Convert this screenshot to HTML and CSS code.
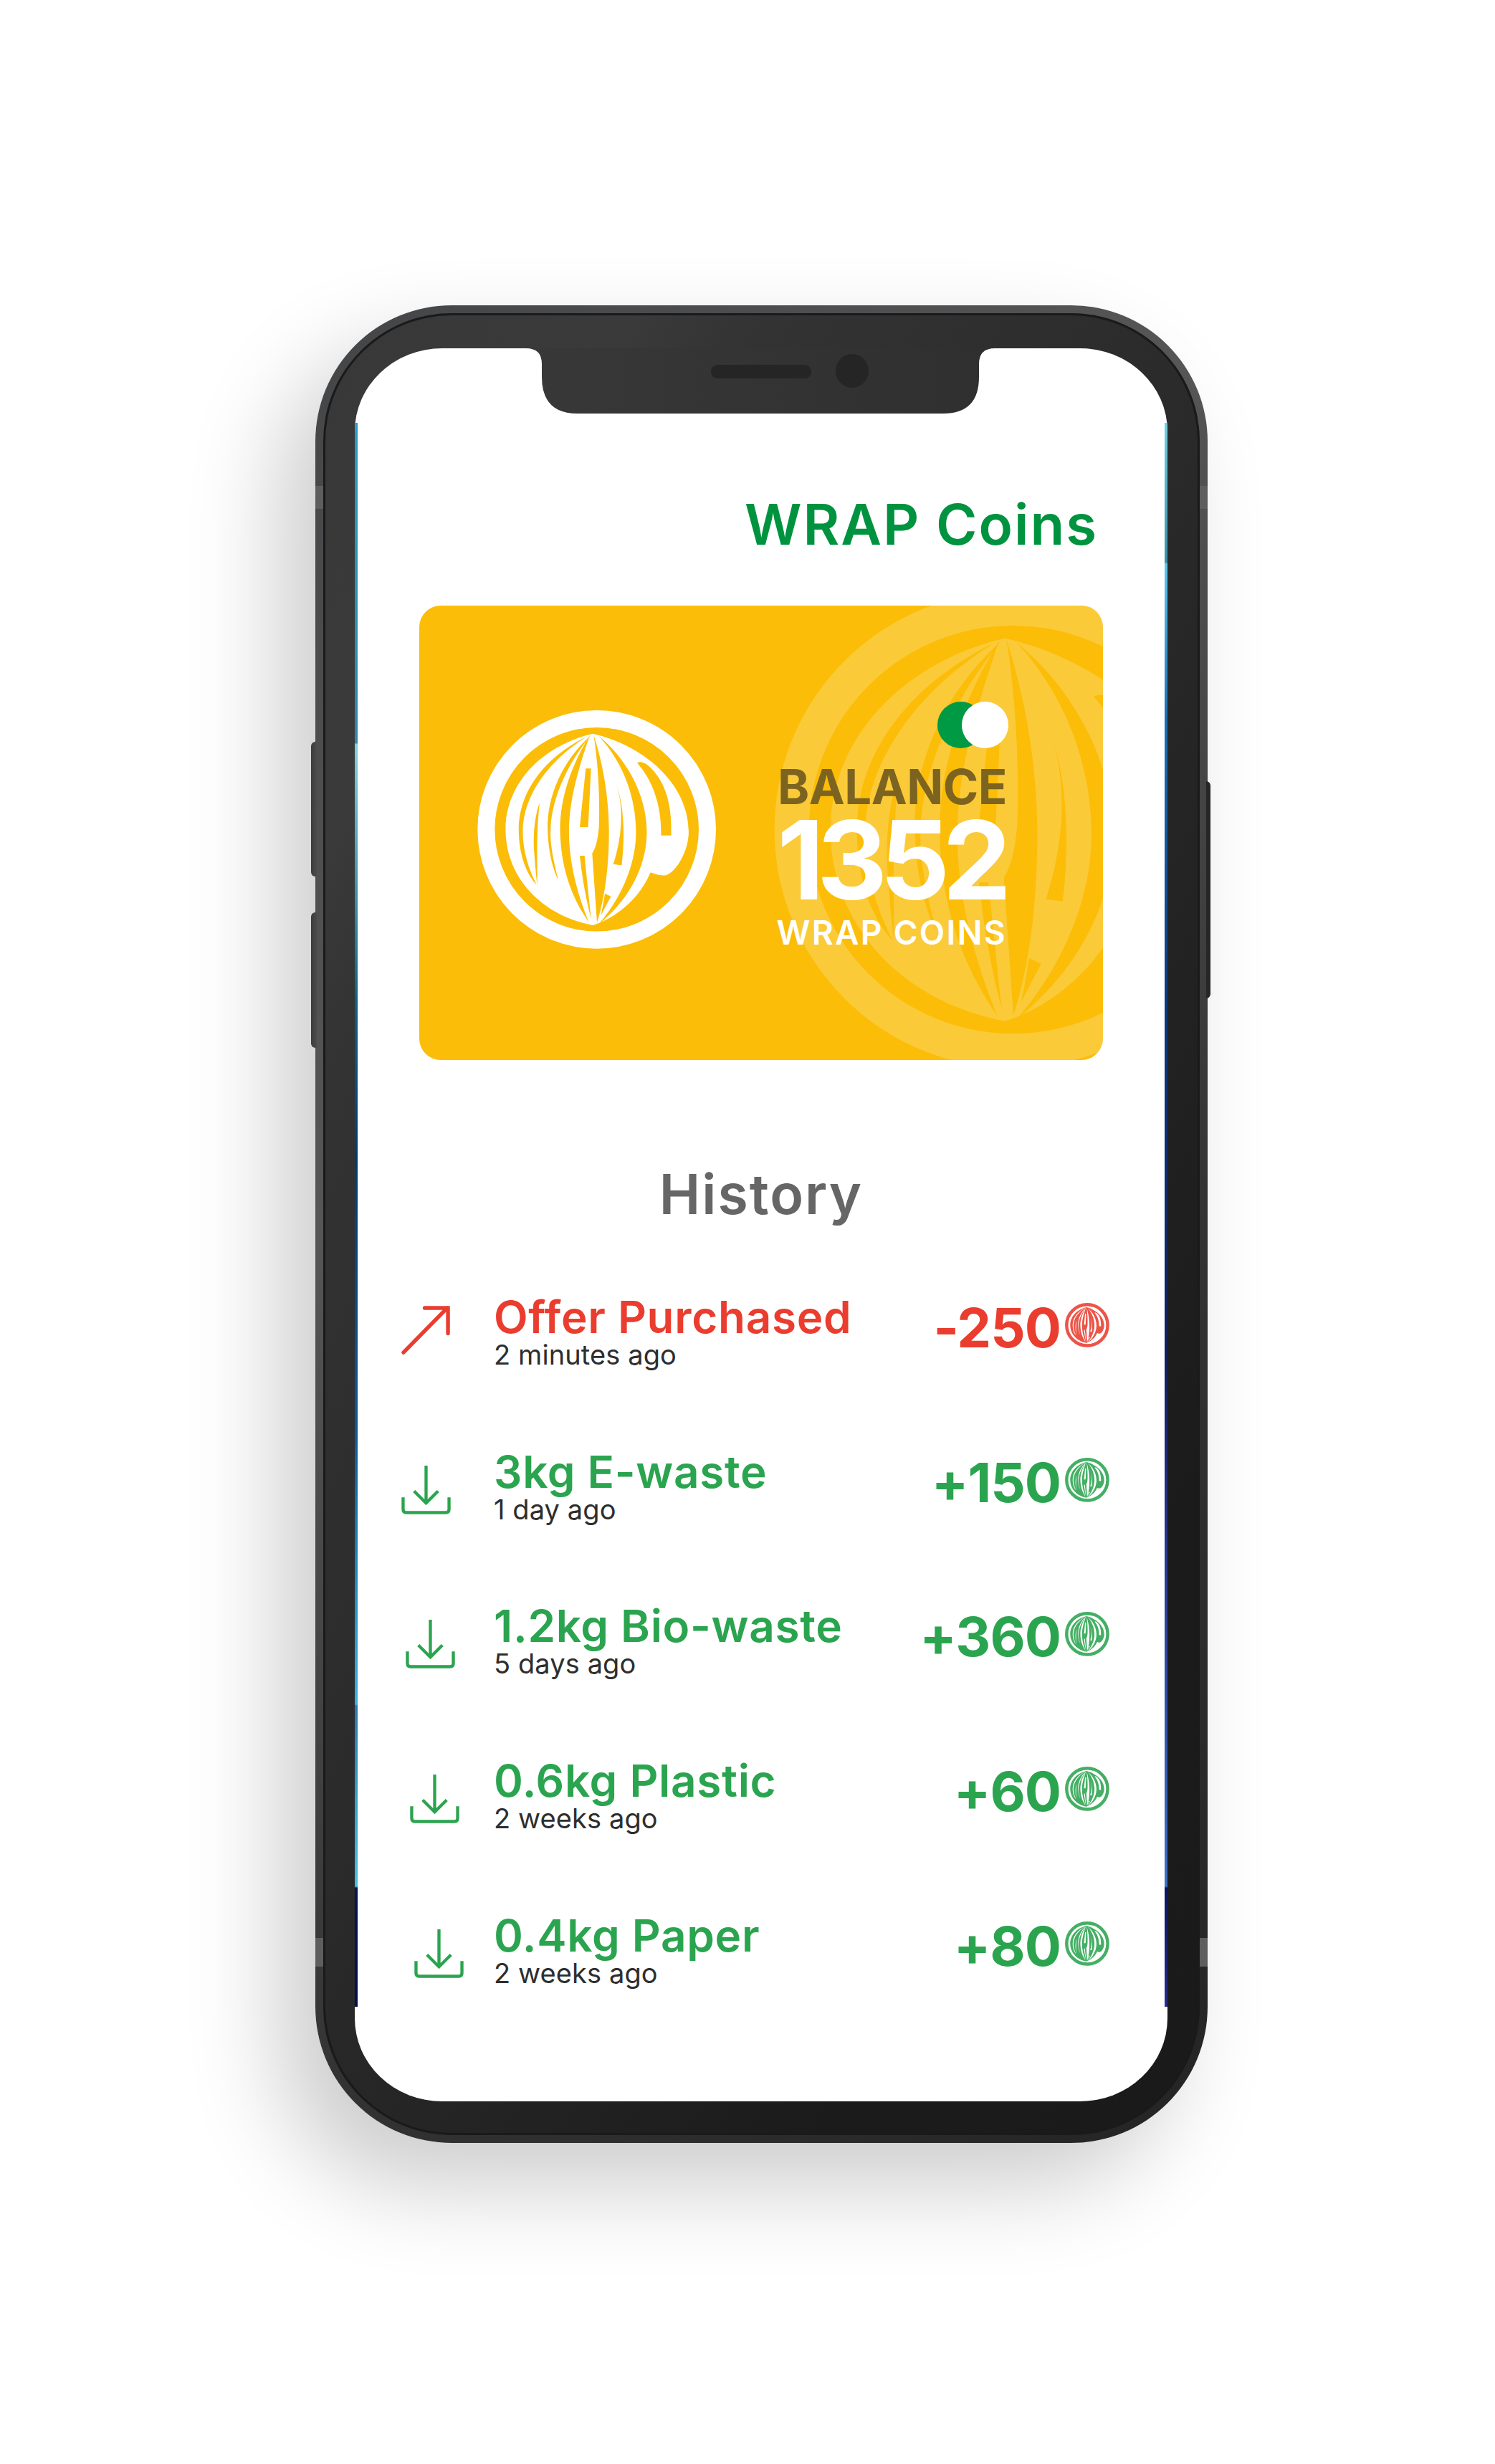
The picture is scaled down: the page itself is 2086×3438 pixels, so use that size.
FILE: index.html
```html
<!DOCTYPE html>
<html lang="en">
<head>
<meta charset="utf-8">
<title>WRAP Coins</title>
<link rel="stylesheet" href="styles.css">
</head>
<body>
<svg class="defs" width="0" height="0" aria-hidden="true">
  <defs>
    <linearGradient id="notch-fill" x1="0" y1="0" x2="1" y2="0">
      <stop offset="0" stop-color="#383838"/>
      <stop offset="1" stop-color="#2f2f2f"/>
    </linearGradient>
    <mask id="globe-cuts" maskUnits="userSpaceOnUse" x="0" y="0" width="1200" height="1200">
      <path fill="#fff" d="M565 190C780 240 965 400 965 600C965 690 900 785 860 782C835 782 820 772 805 770C760 880 660 960 565 990C350 950 200 790 200 590C200 400 350 240 565 190Z"/>
      <g fill="#000">
        <path d="M545 198C340 300 255 450 255 590C255 700 290 780 330 822C298 760 272 680 272 600C272 450 380 300 545 198Z"/>
        <path d="M342 478C320 540 314 620 320 690C324 740 328 790 332 820C334 760 330 680 333 610C335 560 338 520 342 478Z"/>
        <path d="M555 198C440 300 372 450 376 590C378 680 398 760 420 800C400 720 385 650 388 590C392 450 470 300 555 198Z"/>
        <path d="M552 196C470 330 425 470 428 600C432 760 480 880 548 978C500 860 465 730 465 600C465 460 510 320 552 196Z"/>
        <path d="M535 335H557L545 580H510Z"/>
        <path d="M568 195C585 300 595 450 590 580C585 640 575 670 562 690L582 978C620 860 632 720 632 600C632 450 605 310 568 195Z"/>
        <path d="M510 700H530C540 800 550 900 558 965C535 880 520 790 510 700Z"/>
        <path d="M660 395C690 470 695 600 650 735L685 740C700 620 695 480 660 395Z"/>
        <path d="M590 200C700 320 745 470 745 600C745 740 680 880 590 985C720 880 790 740 790 600C790 440 700 290 590 200Z"/>
        <path d="M615 858L640 870L598 950C605 920 610 890 615 858Z"/>
        <path d="M750 312C770 300 800 320 830 360C875 420 895 500 892 615H850C852 480 810 380 750 312Z"/>
      </g>
    </mask>
    <symbol id="wrap-logo" viewBox="82 92 1000 1000">
      <circle cx="581" cy="590" r="462" fill="none" stroke="currentColor" stroke-width="72"/>
      <rect x="150" y="150" width="860" height="880" fill="currentColor" mask="url(#globe-cuts)"/>
    </symbol>
    <symbol id="icon-in" viewBox="0 0 70 70">
      <path d="M35 1V53M18 37L35 54L52 37M2.5 46V63Q2.5 67.500 7 67.500H63Q67.500 67.500 67.500 63V46" fill="none" stroke="currentColor" stroke-width="4.400"/>
    </symbol>
  </defs>
</svg>

<main class="phone">
  <span class="btn btn-left-a"></span>
  <span class="btn btn-left-b"></span>
  <span class="btn btn-right"></span>
  <span class="rail rail-l-top"></span>
  <span class="rail rail-l-bot"></span>
  <span class="rail rail-r-top"></span>
  <span class="rail rail-r-bot"></span>
  <div class="bezel">
    <div class="edge">
      <div class="screen">
        <svg class="notch" viewBox="0 0 654 91" aria-hidden="true">
          <path d="M0 0Q22 0 22 22V40Q22 91 72 91H582Q632 91 632 40V22Q632 0 654 0Z"/>
        </svg>
        <span class="speaker"></span>
        <span class="camera"></span>

        <h1 class="title">WRAP Coins</h1>

        <section class="card">
          <svg class="card-mark"><use href="#wrap-logo"/></svg>
          <svg class="card-logo"><use href="#wrap-logo"/></svg>
          <div class="balance">
            <div class="toggle"><span class="dot-green"></span><span class="dot-white"></span></div>
            <div class="balance-label">BALANCE</div>
            <div class="balance-value">1352</div>
            <div class="balance-unit">WRAP COINS</div>
          </div>
        </section>

        <h2 class="history">History</h2>

        <ul class="rows">
          <li class="row red">
            <span class="slot">
              <svg class="icon arrow" viewBox="0 0 70 70" aria-hidden="true"><path d="M3 67L65 4M33 4H66V40" fill="none" stroke="currentColor" stroke-width="5.500" stroke-linecap="round"/></svg>
            </span>
            <div class="text"><div class="name">Offer Purchased</div><div class="when">2 minutes ago</div></div>
            <div class="amount">-250</div>
            <svg class="coin"><use href="#wrap-logo"/></svg>
          </li>
          <li class="row green">
            <span class="slot">
              <svg class="icon"><use href="#icon-in"/></svg>
            </span>
            <div class="text"><div class="name">3kg E-waste</div><div class="when">1 day ago</div></div>
            <div class="amount">+150</div>
            <svg class="coin"><use href="#wrap-logo"/></svg>
          </li>
          <li class="row green">
            <span class="slot shift-1">
              <svg class="icon"><use href="#icon-in"/></svg>
            </span>
            <div class="text"><div class="name">1.2kg Bio-waste</div><div class="when">5 days ago</div></div>
            <div class="amount">+360</div>
            <svg class="coin"><use href="#wrap-logo"/></svg>
          </li>
          <li class="row green">
            <span class="slot shift-2">
              <svg class="icon"><use href="#icon-in"/></svg>
            </span>
            <div class="text"><div class="name">0.6kg Plastic</div><div class="when">2 weeks ago</div></div>
            <div class="amount">+60</div>
            <svg class="coin"><use href="#wrap-logo"/></svg>
          </li>
          <li class="row green">
            <span class="slot shift-3">
              <svg class="icon"><use href="#icon-in"/></svg>
            </span>
            <div class="text"><div class="name">0.4kg Paper</div><div class="when">2 weeks ago</div></div>
            <div class="amount">+80</div>
            <svg class="coin"><use href="#wrap-logo"/></svg>
          </li>
        </ul>
      </div>
    </div>
  </div>
</main>
</body>
</html>
```
FILE: styles.css
```css
* { box-sizing: border-box; }
html, body { margin: 0; background: #fff; }
body {
  width: 2086px;
  height: 3438px;
  padding: 426px 0 0 440px;
  font-family: Inter, "Liberation Sans", sans-serif;
  overflow: hidden;
}
.defs { position: absolute; }

.phone {
  position: relative;
  width: 1245px;
  height: 2564px;
  border-radius: 190px;
  box-shadow: -50px 60px 130px rgba(0, 0, 0, .2);
}
.bezel {
  width: 100%;
  height: 100%;
  padding: 11px;
  border-radius: 190px;
  background: linear-gradient(135deg, #444547 0%, #565657 34%, #333 66%, #242424 100%);
}
.edge {
  width: 100%;
  height: 100%;
  padding: 49px 45px 47px 44px;
  border-radius: 179px;
  background: linear-gradient(120deg, #383838 0%, #3a3a3a 16%, #333 23%, #2b2b2b 46%, #1b1b1b 80%, #1a1a1a 100%);
  box-shadow: inset 0 0 0 3px #1a1a1a;
}
.screen {
  position: relative;
  width: 100%;
  height: 100%;
  padding: 0 81px 0 0;
  border-radius: 122px / 116px;
  background: #fff;
  overflow: hidden;
}
.screen::before,
.screen::after {
  content: "";
  position: absolute;
  top: 104px;
  bottom: 132px;
  width: 4px;
}
.screen::before {
  left: 0;
  background: linear-gradient(180deg, #2a9cc0 0%, #2f88a8 20.2%, #7fd3d6 20.3%, #0d6080 36.6%, #0a4f80 41%, #053a6e 46.4%, #0a5a9a 64%, #38b2e6 80.9%, #2a78b0 81%, #42c0e8 92.4%, #021650 92.5%, #02104a 100%);
}
.screen::after {
  right: 0;
  background: linear-gradient(180deg, #70d0e0 0%, #3a90a8 8.8%, #5cc8ee 8.9%, #1a70b8 18.5%, #0a3a80 36.6%, #102060 59%, #2a3a9a 72.9%, #3a70c8 92.4%, #0a1660 92.5%, #2a2a90 100%);
}

.notch {
  position: absolute;
  top: 0;
  left: 239px;
  width: 654px;
  height: 91px;
  fill: url(#notch-fill);
}
.speaker {
  position: absolute;
  top: 23px;
  left: 497px;
  width: 140px;
  height: 19px;
  border-radius: 9px;
  background: #252525;
}
.camera {
  position: absolute;
  top: 8px;
  left: 671px;
  width: 46px;
  height: 47px;
  border-radius: 50%;
  background: #252525;
}

.title {
  margin: 0;
  padding: 199px 16px 0 0;
  font-size: 78px;
  line-height: 94px;
  font-weight: 600;
  color: #00933f;
  text-align: right;
  letter-spacing: 2px;
}

.card {
  position: relative;
  width: 954px;
  height: 634px;
  margin: 66px 0 0 90px;
  border-radius: 30px;
  background: #fbbd07;
  overflow: hidden;
}
.card-logo {
  position: absolute;
  left: 81px;
  top: 146px;
  width: 334px;
  height: 334px;
  color: #fff;
}
.card-mark {
  position: absolute;
  left: 495px;
  top: -20px;
  width: 668px;
  height: 668px;
  color: #fff;
  opacity: .2;
}
.balance {
  position: absolute;
  left: 504px;
  top: 134px;
  width: 316px;
  color: #fff;
  display: flex;
  flex-direction: column;
  align-items: flex-end;
}
.toggle { display: flex; height: 65px; margin-right: -2px; }
.dot-green, .dot-white { width: 65px; height: 65px; border-radius: 50%; }
.dot-green { background: #009a44; }
.dot-white { background: #fff; margin-left: -31px; }
.balance-label {
  margin-top: 20px;
  font-size: 67px;
  line-height: 67px;
  font-weight: 700;
  color: #7c6420;
  letter-spacing: -.5px;
  white-space: nowrap;
}
.balance-value {
  margin-top: 4px;
  font-size: 152px;
  line-height: 130px;
  font-weight: 700;
  letter-spacing: -10px;
  margin-right: 4px;
  white-space: nowrap;
}
.balance-unit {
  margin-top: 13px;
  font-size: 46px;
  line-height: 46px;
  font-weight: 600;
  letter-spacing: 2.300px;
  white-space: nowrap;
}

.history {
  margin: 140px 0 0 81px;
  font-size: 77px;
  line-height: 94px;
  font-weight: 600;
  color: #666;
  text-align: center;
  letter-spacing: 2px;
}

.rows { list-style: none; margin: 93px 0 0; padding: 0; }
.row {
  display: flex;
  align-items: flex-start;
  height: 215.700px;
}
.red { color: #ea3d2f; }
.green { color: #2ba44f; }
.slot { width: 194px; padding: 22px 0 0 65px; flex: none; }
.shift-1 { padding-left: 71px; }
.shift-2 { padding-left: 77px; }
.shift-3 { padding-left: 83px; }
.icon { display: block; width: 69px; height: 69px; }
.arrow { margin-top: -7px; }
.text { flex: 1; }
.name {
  font-size: 62px;
  line-height: 64px;
  font-weight: 600;
  letter-spacing: .7px;
  white-space: nowrap;
}
.when {
  margin-top: -2px;
  font-size: 38px;
  line-height: 44px;
  color: #2e2e2e;
  letter-spacing: .1px;
  white-space: nowrap;
}
.amount {
  margin-top: 0;
  font-size: 76px;
  line-height: 92px;
  font-weight: 700;
  letter-spacing: -1px;
  white-space: nowrap;
}
.coin { flex: none; width: 62px; height: 62px; margin: 12px 0 0 6px; opacity: .88; }

.btn { position: absolute; width: 8px; background: linear-gradient(90deg, #3c3c3c, #4c4c4c); border-radius: 6px 0 0 6px; }
.btn-left-a { left: -6px; top: 609px; height: 188px; }
.btn-left-b { left: -6px; top: 847px; height: 189px; }
.btn-right { right: -4px; top: 664px; height: 303px; width: 6px; border-radius: 0 6px 6px 0; background: #262626; }
.rail { position: absolute; z-index: 2; width: 11px; background: #5e5e5e; }
.rail-l-top { left: 0; top: 252px; height: 32px; }
.rail-r-top { right: 0; top: 252px; height: 32px; }
.rail-l-bot { left: 0; top: 2278px; height: 40px; }
.rail-r-bot { right: 0; top: 2278px; height: 40px; }
```
